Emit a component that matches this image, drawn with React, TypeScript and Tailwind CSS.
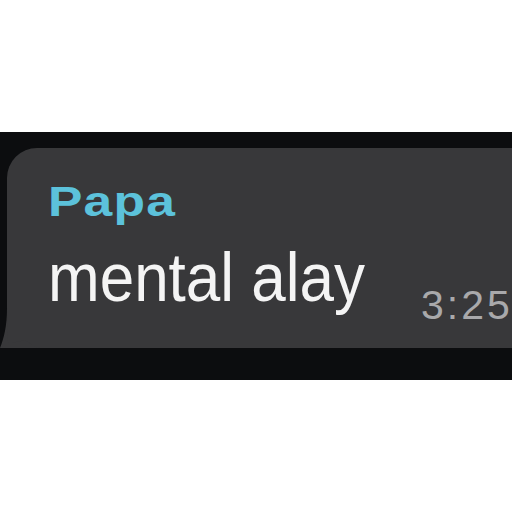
import React from "react";

export default function App() {
  return (
    <div className="w-[512px] h-[512px] bg-white flex flex-col overflow-hidden" style={{ fontFamily: '"Liberation Sans", Arial, sans-serif' }}>
      <div className="h-[132px] shrink-0" />
      <div className="h-[248px] shrink-0 bg-[#0c0d0f] pt-[16px] pl-[7px]">
        <div className="relative h-[200px] bg-[#38383a] rounded-tl-[30px] rounded-bl-[6px] pl-[41px] pt-[32px]">
          {/* bubble tail */}
          <svg className="absolute left-[-7px] bottom-0" width="40" height="40" viewBox="0 0 40 40">
            <path d="M7 0 C7 18 4 30 0 40 L40 40 C34 40 30 34 26 33 C20 32 14 36 8 34 Z" fill="#38383a" />
          </svg>
          <div className="text-[43px] leading-[43px] font-bold text-[#5cc2db] tracking-[1px] origin-left scale-x-[1.2]">
            Papa
          </div>
          <div className="flex items-start mt-[24px] whitespace-nowrap">
            <div className="shrink-0 text-[62px] leading-[62px] text-[#f4f4f4] scale-y-[1.1] origin-center">
              mental alay
            </div>
            <div className="shrink-0 ml-[56px] mt-[38px] text-[41px] leading-[40px] text-[#a9a9ab] tracking-[3px]">
              3:25
            </div>
          </div>
        </div>
      </div>
    </div>
  );
}
